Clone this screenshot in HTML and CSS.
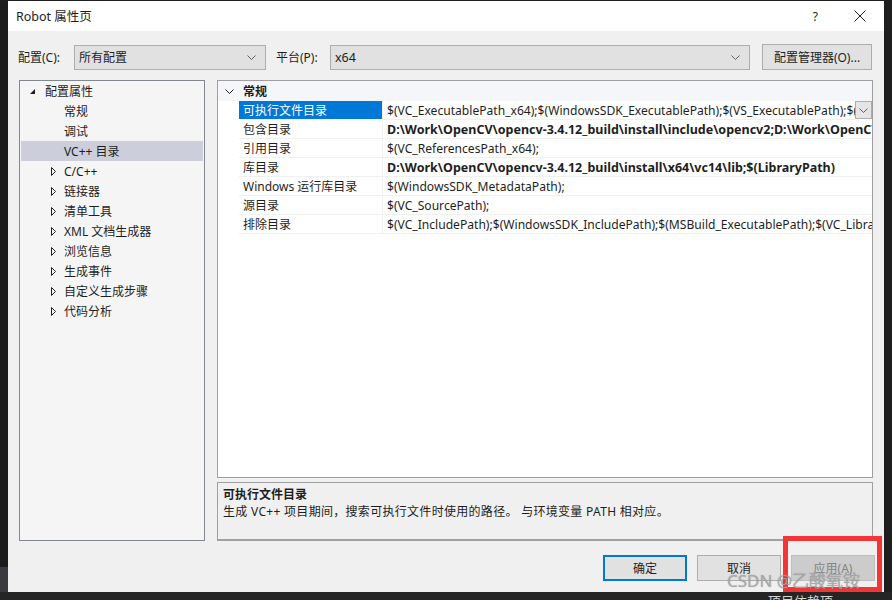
FILE: index.html
```html
<!DOCTYPE html>
<html lang="zh-CN">
<head>
<meta charset="utf-8">
<title>Robot 属性页</title>
<link rel="stylesheet" href="styles.css">
</head>
<body>
<div class="screen">
  <div class="top-gap"></div>
  <div class="stage">
    <div class="side-left"><div class="side-block"></div></div>
    <div class="dialog">
      <div class="titlebar">
        <span class="title">Robot 属性页</span>
        <span class="help">?</span>
        <svg class="close" width="12" height="12" viewBox="0 0 12 12"><path d="M0.5 0.5L11.5 11.5M11.5 0.5L0.5 11.5" stroke="#1e1e1e" stroke-width="1" fill="none"/></svg>
      </div>
      <div class="body">
        <div class="toolbar">
          <span class="lbl lbl-config">配置(C):</span>
          <div class="combo combo-config"><span class="combo-text">所有配置</span><svg class="chev" width="9" height="5" viewBox="0 0 9 5"><path d="M0.5 0.5L4.5 4.5L8.5 0.5" stroke="#606060" fill="none"/></svg></div>
          <span class="lbl lbl-platform">平台(P):</span>
          <div class="combo combo-platform"><span class="combo-text">x64</span><svg class="chev" width="9" height="5" viewBox="0 0 9 5"><path d="M0.5 0.5L4.5 4.5L8.5 0.5" stroke="#606060" fill="none"/></svg></div>
          <button class="btn btn-manager">配置管理器(O)...</button>
        </div>
        <div class="main">
          <div class="tree">
            <div class="trow l0"><span class="twisty tw0"><svg width="5" height="5" viewBox="0 0 5 5"><path d="M5 0L5 5L0 5Z" fill="#1e1e1e"/></svg></span><span class="ttext">配置属性</span></div>
            <div class="trow l1"><span class="twisty tw1"></span><span class="ttext">常规</span></div>
            <div class="trow l1"><span class="twisty tw1"></span><span class="ttext">调试</span></div>
            <div class="trow l1 sel"><span class="twisty tw1"></span><span class="ttext">VC++ 目录</span></div>
            <div class="trow l1"><span class="twisty tw1"><svg width="5" height="9" viewBox="0 0 5 9"><path d="M0.5 0.5L4.5 4.5L0.5 8.5Z" stroke="#1e1e1e" fill="none"/></svg></span><span class="ttext">C/C++</span></div>
            <div class="trow l1"><span class="twisty tw1"><svg width="5" height="9" viewBox="0 0 5 9"><path d="M0.5 0.5L4.5 4.5L0.5 8.5Z" stroke="#1e1e1e" fill="none"/></svg></span><span class="ttext">链接器</span></div>
            <div class="trow l1"><span class="twisty tw1"><svg width="5" height="9" viewBox="0 0 5 9"><path d="M0.5 0.5L4.5 4.5L0.5 8.5Z" stroke="#1e1e1e" fill="none"/></svg></span><span class="ttext">清单工具</span></div>
            <div class="trow l1"><span class="twisty tw1"><svg width="5" height="9" viewBox="0 0 5 9"><path d="M0.5 0.5L4.5 4.5L0.5 8.5Z" stroke="#1e1e1e" fill="none"/></svg></span><span class="ttext">XML 文档生成器</span></div>
            <div class="trow l1"><span class="twisty tw1"><svg width="5" height="9" viewBox="0 0 5 9"><path d="M0.5 0.5L4.5 4.5L0.5 8.5Z" stroke="#1e1e1e" fill="none"/></svg></span><span class="ttext">浏览信息</span></div>
            <div class="trow l1"><span class="twisty tw1"><svg width="5" height="9" viewBox="0 0 5 9"><path d="M0.5 0.5L4.5 4.5L0.5 8.5Z" stroke="#1e1e1e" fill="none"/></svg></span><span class="ttext">生成事件</span></div>
            <div class="trow l1"><span class="twisty tw1"><svg width="5" height="9" viewBox="0 0 5 9"><path d="M0.5 0.5L4.5 4.5L0.5 8.5Z" stroke="#1e1e1e" fill="none"/></svg></span><span class="ttext">自定义生成步骤</span></div>
            <div class="trow l1"><span class="twisty tw1"><svg width="5" height="9" viewBox="0 0 5 9"><path d="M0.5 0.5L4.5 4.5L0.5 8.5Z" stroke="#1e1e1e" fill="none"/></svg></span><span class="ttext">代码分析</span></div>
          </div>
          <div class="right">
            <div class="grid">
              <div class="ghead">
                <span class="gutter"><svg width="9" height="5" viewBox="0 0 9 5"><path d="M0.5 0.5L4.5 4.5L8.5 0.5" stroke="#1e1e1e" fill="none"/></svg></span>
                <span class="ghead-text">常规</span>
              </div>
              <div class="grow">
                <span class="gutter"></span>
                <span class="gname selname">可执行文件目录</span>
                <span class="gval">$(VC_ExecutablePath_x64);$(WindowsSDK_ExecutablePath);$(VS_ExecutablePath);$(MSBuild_ExecutablePath);$(FxCopDir);$(PATH);</span>
                <span class="gdrop"><svg width="9" height="5" viewBox="0 0 9 5"><path d="M0.5 0.5L4.5 4.5L8.5 0.5" stroke="#606060" fill="none"/></svg></span>
              </div>
              <div class="grow">
                <span class="gutter"></span>
                <span class="gname">包含目录</span>
                <span class="gval bold">D:\Work\OpenCV\opencv-3.4.12_build\install\include\opencv2;D:\Work\OpenCV\opencv-3.4.12_build\install\include;$(IncludePath)</span>
              </div>
              <div class="grow">
                <span class="gutter"></span>
                <span class="gname">引用目录</span>
                <span class="gval">$(VC_ReferencesPath_x64);</span>
              </div>
              <div class="grow">
                <span class="gutter"></span>
                <span class="gname">库目录</span>
                <span class="gval bold">D:\Work\OpenCV\opencv-3.4.12_build\install\x64\vc14\lib;$(LibraryPath)</span>
              </div>
              <div class="grow">
                <span class="gutter"></span>
                <span class="gname">Windows 运行库目录</span>
                <span class="gval">$(WindowsSDK_MetadataPath);</span>
              </div>
              <div class="grow">
                <span class="gutter"></span>
                <span class="gname">源目录</span>
                <span class="gval">$(VC_SourcePath);</span>
              </div>
              <div class="grow">
                <span class="gutter"></span>
                <span class="gname">排除目录</span>
                <span class="gval">$(VC_IncludePath);$(WindowsSDK_IncludePath);$(MSBuild_ExecutablePath);$(VC_LibraryPath_x64);</span>
              </div>
            </div>
            <div class="desc">
              <div class="desc-title">可执行文件目录</div>
              <div class="desc-text">生成 VC++ 项目期间，搜索可执行文件时使用的路径。 与环境变量 PATH 相对应。</div>
            </div>
          </div>
        </div>
        <div class="buttons">
          <button class="btn btn-ok">确定</button>
          <button class="btn">取消</button>
          <button class="btn btn-disabled">应用(A)</button>
        </div>
      </div>
    </div>
    <div class="side-right"></div>
  </div>
  <div class="bottom-strip"><span class="bottom-text">项目依赖项</span></div>
  <div class="redbox"></div>
  <div class="watermark">CSDN @乙酸氧铵</div>
</div>
</body>
</html>
```

FILE: styles.css
```css
* { box-sizing: border-box; }
html, body { margin: 0; padding: 0; }
body {
  background: #1e1e1e;
  font-family: "Noto Sans", "Noto Sans CJK SC", sans-serif;
  font-size: 12px;
  color: #1e1e1e;
}
.screen {
  position: relative;
  width: 892px;
  height: 600px;
  overflow: hidden;
  display: flex;
  flex-direction: column;
}
.top-gap { height: 1px; background: #1e1e1e; }
.stage { display: flex; height: 591px; }
.side-left {
  width: 8px;
  background: #1c1c1c;
  display: flex;
  flex-direction: column;
  justify-content: flex-end;
}
.side-block { height: 25px; background: #3a3a3f; }
.side-right { width: 8px; background: #1e1e1e; }
.dialog {
  width: 876px;
  display: flex;
  flex-direction: column;
}
.titlebar {
  height: 30px;
  background: #ffffff;
  display: flex;
  align-items: center;
  padding-left: 8px;
  font-size: 12.5px;
}
.title { line-height: 16px; padding-top: 2px; }
.help { margin-left: auto; font-size: 12px; line-height: 14px; padding-top: 1px; }
.close { margin-left: 36px; margin-right: 18px; }
.body {
  flex: 1;
  background: #f0f0f0;
  display: flex;
  flex-direction: column;
}
.toolbar {
  margin-top: 13px;
  height: 26px;
  display: flex;
  align-items: center;
  padding-left: 10px;
}
.lbl { line-height: 16px; white-space: nowrap; padding-top: 2px; }
.lbl-config { width: 56px; }
.lbl-platform { width: 54px; margin-left: 10px; }
.combo {
  height: 25px;
  background: #e1e1e1;
  border: 1px solid #adadad;
  display: flex;
  align-items: center;
  padding: 0 9px 0 4px;
}
.combo-text { flex: 1; line-height: 16px; padding-top: 2px; }
.combo-platform .combo-text { font-size: 12.5px; }
.combo-config { width: 192px; }
.combo-platform { width: 420px; }
.btn {
  font-family: inherit;
  font-size: 12px;
  color: #1e1e1e;
  background: #e1e1e1;
  border: 1px solid #adadad;
  height: 26px;
  width: 84px;
  padding: 2px 0 0;
  line-height: 16px;
}
.btn-manager { width: 110px; margin-left: 12px; }
.main {
  margin-top: 10px;
  height: 461px;
  display: flex;
  padding-left: 11px;
  gap: 12px;
}
.tree {
  width: 186px;
  height: 461px;
  background: #f5f5f5;
  border: 1px solid #828790;
  display: flex;
  flex-direction: column;
}
.trow {
  height: 20px;
  display: flex;
  align-items: center;
  white-space: nowrap;
}
.ttext { line-height: 16px; padding-top: 2px; }
.trow.l0 { padding-left: 10px; }
.trow.l1 { padding-left: 31px; }
.twisty { display: flex; align-items: center; }
.tw0 { width: 15px; }
.tw1 { width: 13px; }
.trow.sel { background: #cccedb; margin: 0 1px; padding-left: 30px; }
.right {
  width: 656px;
  display: flex;
  flex-direction: column;
  gap: 4px;
}
.grid {
  height: 398px;
  background: #ffffff;
  border: 1px solid #a0a0a0;
  display: flex;
  flex-direction: column;
}
.ghead {
  height: 20px;
  background: #f4f6fa;
  display: flex;
  align-items: center;
}
.gutter {
  width: 21px;
  flex: none;
  display: flex;
  justify-content: center;
  align-items: center;
  padding-left: 1px;
}
.ghead-text { font-weight: bold; padding: 2px 0 0 4px; line-height: 16px; }
.grow {
  height: 19px;
  display: flex;
  align-items: stretch;
  white-space: nowrap;
}
.gname {
  width: 144px;
  flex: none;
  padding: 2px 0 0 4px;
  line-height: 16px;
  border-bottom: 1px solid #f0f0f0;
  border-right: 1px solid #f0f0f0;
}
.selname { background: #0078d7; color: #ffffff; border-bottom-color: #ffffff; }
.gval {
  flex: 1;
  min-width: 0;
  overflow: hidden;
  padding: 2px 0 0 4px;
  line-height: 16px;
  font-size: 12.1px;
  border-bottom: 1px solid #f0f0f0;
}
.gval.bold { font-weight: bold; font-size: 12.5px; }
.gdrop {
  width: 17px;
  flex: none;
  height: 18px;
  background: #e5e5e5;
  border: 1px solid #adadad;
  display: flex;
  align-items: center;
  justify-content: center;
}
.desc {
  height: 59px;
  background: #f0f0f0;
  border: 1px solid #a0a0a0;
  border-bottom-width: 2px;
  padding: 3px 5px 0;
}
.desc-title { font-weight: bold; line-height: 17px; }
.desc-text { line-height: 18px; letter-spacing: 0.3px; }
.buttons {
  margin-top: 14px;
  display: flex;
  justify-content: flex-end;
  gap: 10px;
  padding-right: 9px;
}
.btn-ok { border: 2px solid #0078d7; }
.btn-disabled { background: #cccccc; border-color: #bfbfbf; color: #838383; }
.bottom-strip {
  height: 8px;
  background: #252526;
  overflow: hidden;
  padding-left: 768px;
}
.bottom-text {
  display: block;
  color: #d4d4d4;
  font-size: 13px;
  line-height: 16px;
  margin-top: 1px;
}
.redbox {
  position: absolute;
  left: 783px;
  top: 536px;
  width: 99px;
  height: 56px;
  border: 5px solid #f53535;
}
.watermark {
  position: absolute;
  left: 727px;
  top: 570px;
  font-size: 17px;
  line-height: 22px;
  color: rgba(170, 170, 170, 0.85);
  text-shadow: 0 0 1px rgba(90, 90, 90, 0.5);
  white-space: nowrap;
}
```
